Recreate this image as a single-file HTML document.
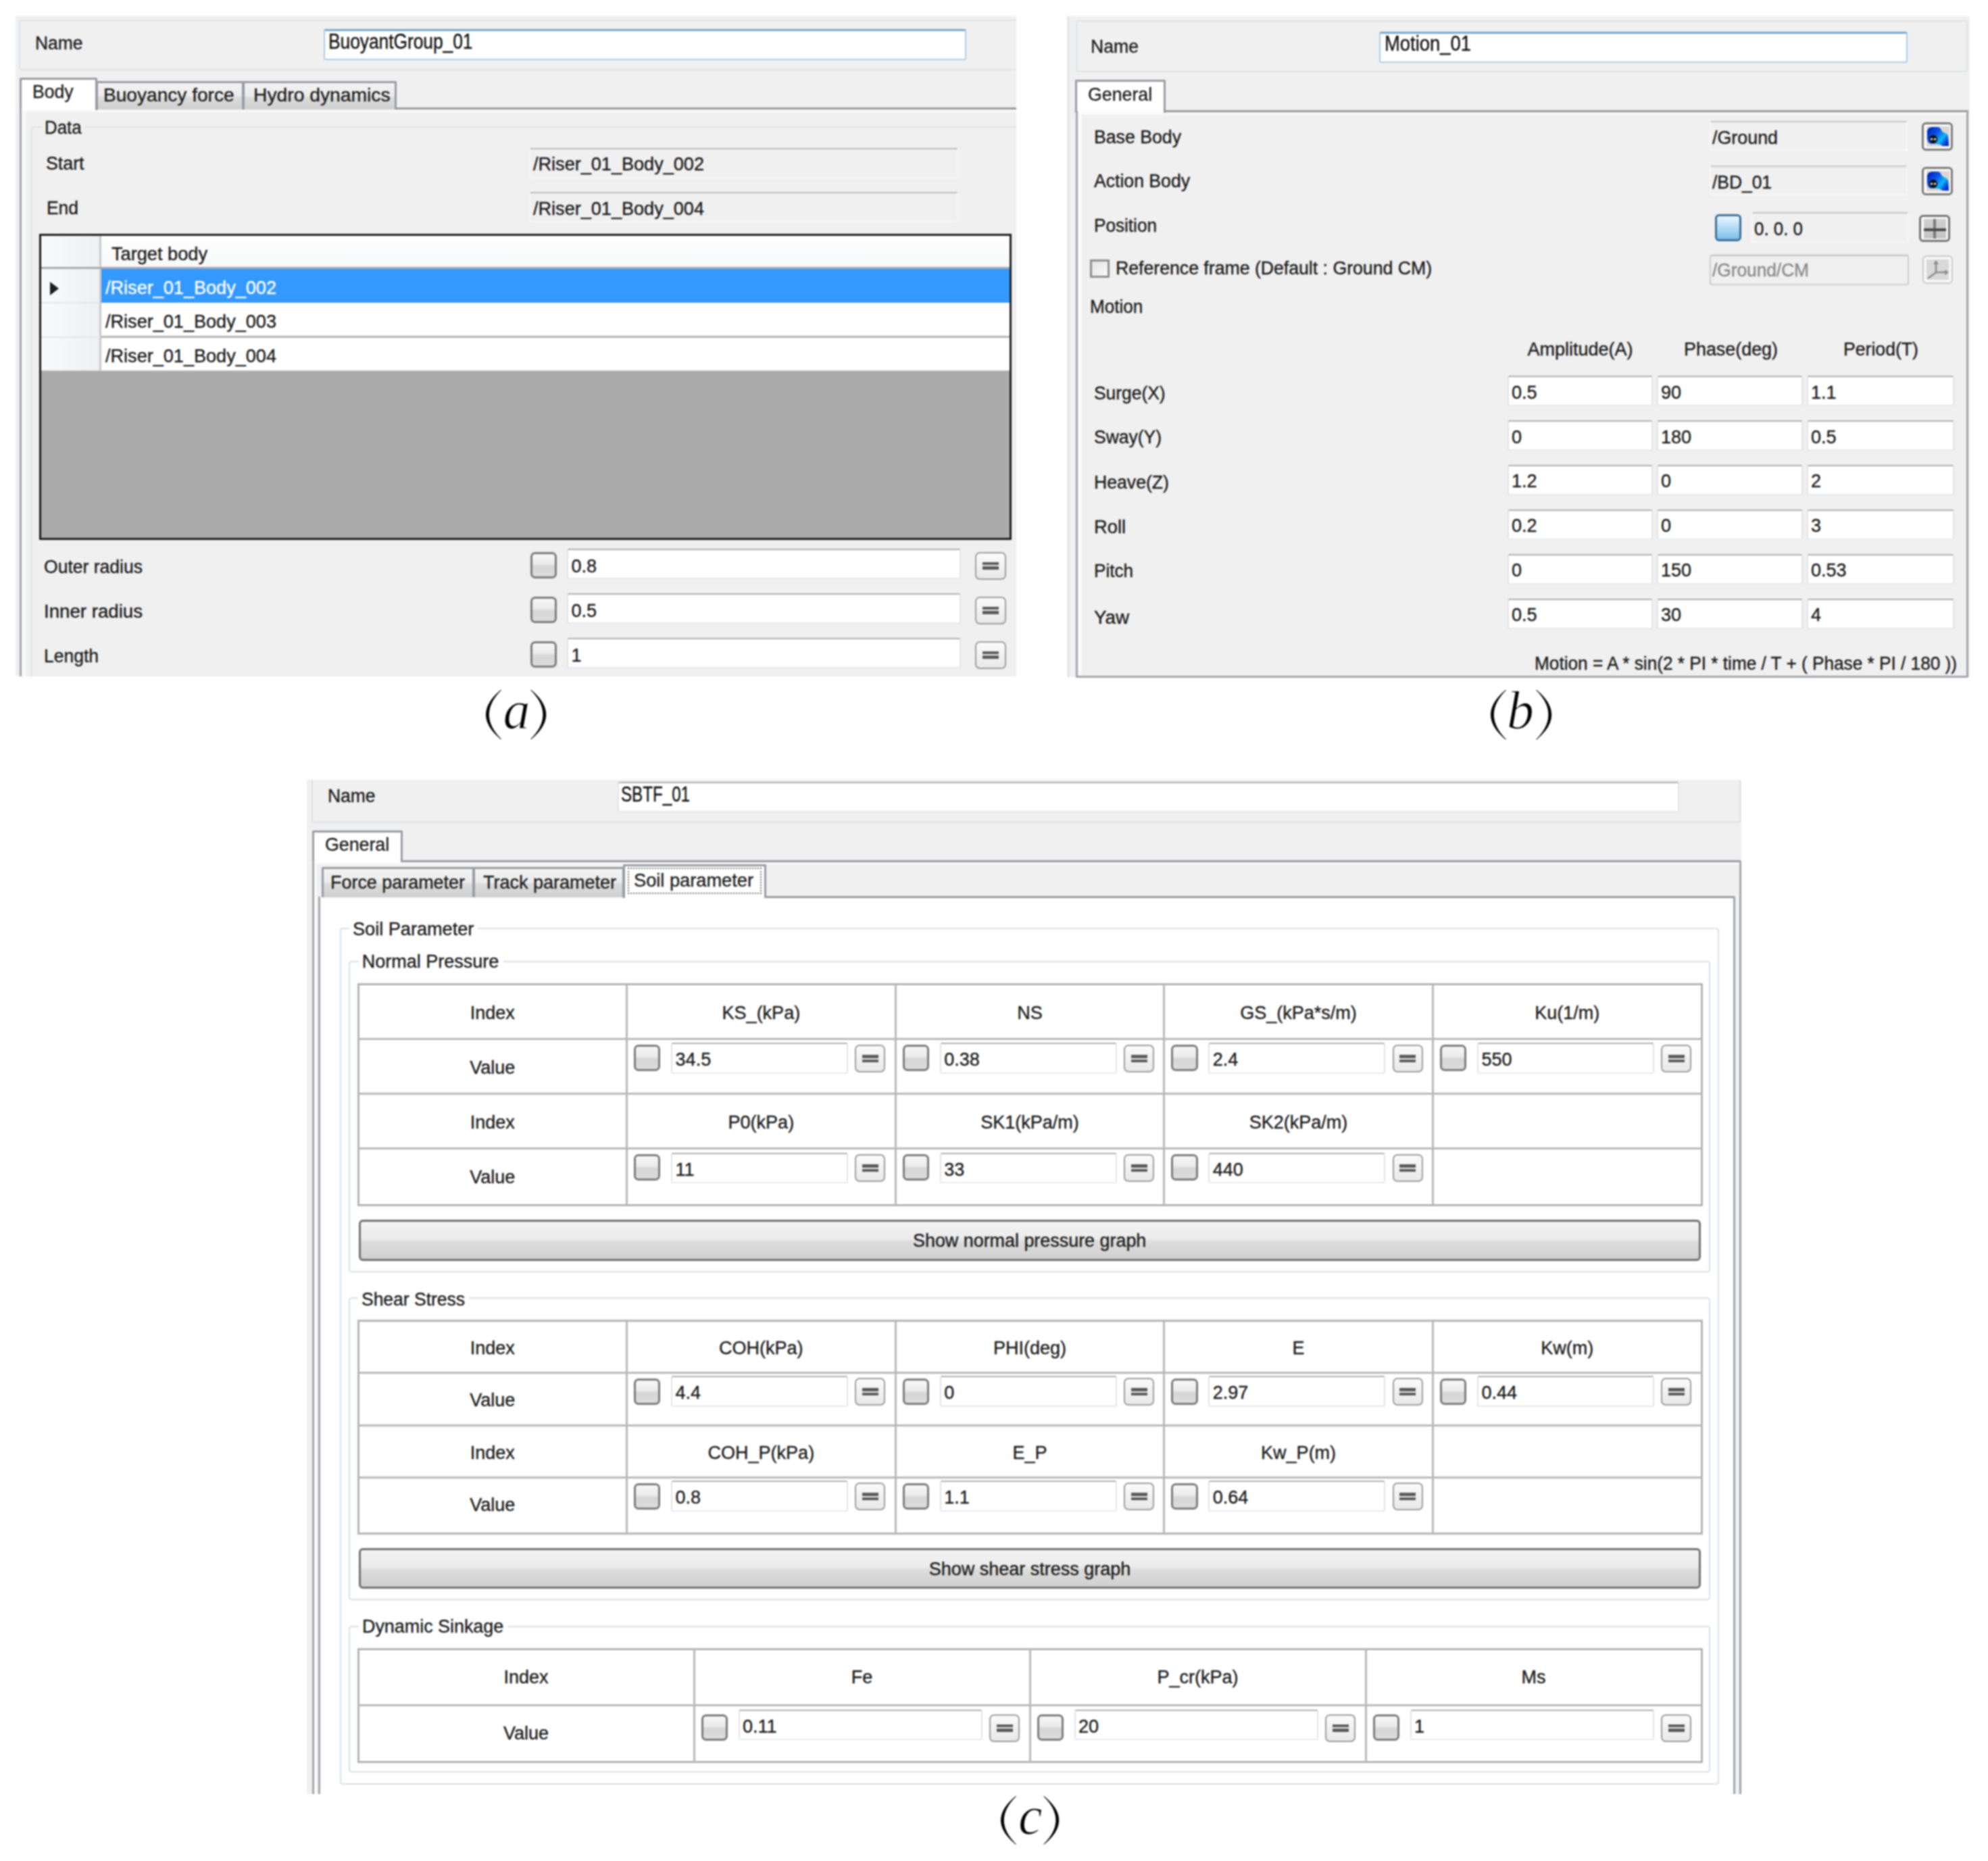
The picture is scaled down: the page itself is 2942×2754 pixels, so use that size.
<!DOCTYPE html>
<html><head><meta charset="utf-8"><title>figure</title><style>
html,body{margin:0;padding:0;background:#fff;}
body{width:2942px;height:2754px;position:relative;overflow:hidden;}
.b{position:absolute;}
.t{position:absolute;white-space:pre;font-family:"Liberation Sans",sans-serif;-webkit-text-stroke:0.35px currentColor;}
.lab{font-family:"Liberation Serif",serif;font-style:italic;color:#000;-webkit-text-stroke:1.2px #fff;}
#root{position:absolute;left:0;top:0;width:2942px;height:2754px;filter:blur(0.8px);}
</style></head><body><div id="root">
<div class="b" style="left:23px;top:24px;width:1481px;height:977px;background:#f0f0f0;"></div>
<div class="b" style="left:28px;top:29px;width:1476px;height:75px;border:2px solid #dde3e8;border-right:none;border-radius:4px 0 0 4px;box-sizing:border-box;"></div>
<div class="t" style="left:51.5px;top:51.1px;font-size:27px;line-height:27px;color:#1a1a1a;transform:scaleX(0.9788);transform-origin:0 0;">Name</div>
<div class="b" style="left:479px;top:43px;width:951px;height:46px;background:#fff;border:2px solid #a9cbe6;border-top:3px solid #7aa6cf;border-radius:3px;box-sizing:border-box;"></div>
<div class="t" style="left:485.5px;top:45.8px;font-size:31px;line-height:31px;color:#111;transform:scaleX(0.8484);transform-origin:0 0;">BuoyantGroup_01</div>
<div class="b" style="left:142px;top:159px;width:1362px;height:3px;background:#989ba2;"></div>
<div class="b" style="left:142px;top:120px;width:219px;height:42px;background:linear-gradient(#f3f3f3 0%,#ebebeb 50%,#dddddd 51%,#cfcfcf 100%);border:3px solid #989ba2;border-bottom:none;border-radius:2px 2px 0 0;box-sizing:border-box;"></div>
<div class="t" style="left:153px;top:126.7px;font-size:28px;line-height:28px;color:#1c1c1c;transform:scaleX(1.0031);transform-origin:0 0;">Buoyancy force</div>
<div class="b" style="left:359px;top:120px;width:228px;height:42px;background:linear-gradient(#f3f3f3 0%,#ebebeb 50%,#dddddd 51%,#cfcfcf 100%);border:3px solid #989ba2;border-bottom:none;border-radius:2px 2px 0 0;box-sizing:border-box;"></div>
<div class="t" style="left:374.7px;top:126.7px;font-size:28px;line-height:28px;color:#1c1c1c;transform:scaleX(1.0093);transform-origin:0 0;">Hydro dynamics</div>
<div class="b" style="left:29px;top:115px;width:115px;height:50px;background:#ffffff;border:3px solid #989ba2;border-bottom:none;border-radius:2px 2px 0 0;box-sizing:border-box;"></div>
<div class="t" style="left:48px;top:122.2px;font-size:28px;line-height:28px;color:#1c1c1c;transform:scaleX(0.9479);transform-origin:0 0;">Body</div>
<div class="b" style="left:28.5px;top:160px;width:3px;height:841px;background:#a3a5ab;"></div>
<div class="b" style="left:32px;top:163px;width:1472px;height:838px;background:#f0f0f0;border-left:6px solid #f9f9f9;border-top:3px solid #f9f9f9;box-sizing:border-box;"></div>
<div class="b" style="left:46px;top:187px;width:1458px;height:814px;border:2px solid #dde3e8;border-right:none;border-bottom:none;border-radius:4px 0 0 0;box-sizing:border-box;"></div>
<div class="b" style="left:60.5px;top:175px;width:65.5px;height:30px;background:#f0f0f0;"></div>
<div class="t" style="left:65.5px;top:176.1px;font-size:27px;line-height:27px;color:#1a1a1a;transform:scaleX(0.9556);transform-origin:0 0;">Data</div>
<div class="t" style="left:68px;top:228.6px;font-size:27px;line-height:27px;color:#1a1a1a;transform:scaleX(0.9909);transform-origin:0 0;">Start</div>
<div class="t" style="left:69px;top:294.7px;font-size:27px;line-height:27px;color:#1a1a1a;transform:scaleX(0.9783);transform-origin:0 0;">End</div>
<div class="b" style="left:783px;top:219px;width:635px;height:45px;background:#f0f0f0;border-top:2px solid #bdbdbd;border-left:2px solid #f6f6f6;border-right:2px solid #f6f6f6;border-bottom:2px solid #f7f7f7;border-radius:3px;box-sizing:border-box;"></div>
<div class="t" style="left:788.6px;top:230.1px;font-size:27px;line-height:27px;color:#1a1a1a;transform:scaleX(1.0032);transform-origin:0 0;">/Riser_01_Body_002</div>
<div class="b" style="left:783px;top:284px;width:635px;height:45px;background:#f0f0f0;border-top:2px solid #bdbdbd;border-left:2px solid #f6f6f6;border-right:2px solid #f6f6f6;border-bottom:2px solid #f7f7f7;border-radius:3px;box-sizing:border-box;"></div>
<div class="t" style="left:788.6px;top:296.1px;font-size:27px;line-height:27px;color:#1a1a1a;transform:scaleX(1.0032);transform-origin:0 0;">/Riser_01_Body_004</div>
<div class="b" style="left:57.5px;top:345.5px;width:1439px;height:453.5px;background:#ababab;border:3px solid #1c1c1c;box-sizing:border-box;"></div>
<div class="b" style="left:61px;top:349px;width:1433px;height:48px;background:linear-gradient(#ffffff,#f7f8fa);"></div>
<div class="b" style="left:61px;top:349px;width:87px;height:199px;background:linear-gradient(90deg,#f9fafb,#eef0f3);"></div>
<div class="b" style="left:146.5px;top:349px;width:3px;height:199px;background:#c9cacc;"></div>
<div class="b" style="left:61px;top:395px;width:1433px;height:3px;background:#a9aaad;"></div>
<div class="t" style="left:165px;top:362.6px;font-size:27px;line-height:27px;color:#1a1a1a;transform:scaleX(1.0064);transform-origin:0 0;">Target body</div>
<div class="b" style="left:149.5px;top:398px;width:1344.5px;height:49.5px;background:#3399ff;"></div>
<div class="b" style="left:149.5px;top:448px;width:1344.5px;height:50px;background:#ffffff;"></div>
<div class="b" style="left:149.5px;top:500px;width:1344.5px;height:48px;background:#ffffff;"></div>
<div class="b" style="left:149.5px;top:497.3px;width:1344.5px;height:3px;background:#b4b5b8;"></div>
<div class="b" style="left:61px;top:446.5px;width:87px;height:2px;background:#e4e5e8;"></div>
<div class="b" style="left:61px;top:497.5px;width:87px;height:2px;background:#e4e5e8;"></div>
<div class="b" style="left:61px;top:547.8px;width:1433px;height:1.5px;background:#d0d0d0;"></div>
<div class="t" style="left:156px;top:413.1px;font-size:27px;line-height:27px;color:#ffffff;transform:scaleX(1.0032);transform-origin:0 0;">/Riser_01_Body_002</div>
<div class="t" style="left:156px;top:463.1px;font-size:27px;line-height:27px;color:#1a1a1a;transform:scaleX(1.0032);transform-origin:0 0;">/Riser_01_Body_003</div>
<div class="t" style="left:156px;top:513.5px;font-size:27px;line-height:27px;color:#1a1a1a;transform:scaleX(1.0032);transform-origin:0 0;">/Riser_01_Body_004</div>
<svg class="b" style="left:73px;top:416px" width="16" height="22"><path d="M1 1 L14 11 L1 21 Z" fill="#1e1e1e"/></svg>
<div class="t" style="left:65px;top:826.1px;font-size:27px;line-height:27px;color:#1a1a1a;transform:scaleX(0.9827);transform-origin:0 0;">Outer radius</div>
<div class="b" style="left:785px;top:816.5px;width:39px;height:39px;background:linear-gradient(#f7f7f7 0%,#ebebeb 45%,#d6d6d6 55%,#dcdcdc 100%);border:3px solid #7b7b7b;border-radius:7px;box-sizing:border-box;"></div>
<div class="b" style="left:839px;top:812px;width:583px;height:45px;background:#ffffff;border-top:2px solid #adadb0;border-left:2px solid #e3e4e8;border-right:2px solid #e3e4e8;border-bottom:2px solid #e6eaef;border-radius:3px;box-sizing:border-box;"></div>
<div class="t" style="left:845.6px;top:824.5px;font-size:27px;line-height:27px;color:#1a1a1a;">0.8</div>
<div class="b" style="left:1443px;top:817px;width:45.5px;height:40.5px;background:linear-gradient(#fbfbfb,#f1f1f1 50%,#e9e9e9);border:2px solid #9c9c9c;border-radius:7px;box-sizing:border-box;"></div>
<div class="b" style="left:1453.8px;top:831.8px;width:24px;height:4.5px;background:#5a5a5a;"></div>
<div class="b" style="left:1453.8px;top:838.2px;width:24px;height:4.5px;background:#5a5a5a;"></div>
<div class="t" style="left:65px;top:892.1px;font-size:27px;line-height:27px;color:#1a1a1a;transform:scaleX(1.0239);transform-origin:0 0;">Inner radius</div>
<div class="b" style="left:785px;top:882.5px;width:39px;height:39px;background:linear-gradient(#f7f7f7 0%,#ebebeb 45%,#d6d6d6 55%,#dcdcdc 100%);border:3px solid #7b7b7b;border-radius:7px;box-sizing:border-box;"></div>
<div class="b" style="left:839px;top:878px;width:583px;height:45px;background:#ffffff;border-top:2px solid #adadb0;border-left:2px solid #e3e4e8;border-right:2px solid #e3e4e8;border-bottom:2px solid #e6eaef;border-radius:3px;box-sizing:border-box;"></div>
<div class="t" style="left:845.6px;top:890.5px;font-size:27px;line-height:27px;color:#1a1a1a;">0.5</div>
<div class="b" style="left:1443px;top:883px;width:45.5px;height:40.5px;background:linear-gradient(#fbfbfb,#f1f1f1 50%,#e9e9e9);border:2px solid #9c9c9c;border-radius:7px;box-sizing:border-box;"></div>
<div class="b" style="left:1453.8px;top:897.8px;width:24px;height:4.5px;background:#5a5a5a;"></div>
<div class="b" style="left:1453.8px;top:904.2px;width:24px;height:4.5px;background:#5a5a5a;"></div>
<div class="t" style="left:65px;top:958.1px;font-size:27px;line-height:27px;color:#1a1a1a;transform:scaleX(0.9808);transform-origin:0 0;">Length</div>
<div class="b" style="left:785px;top:948.5px;width:39px;height:39px;background:linear-gradient(#f7f7f7 0%,#ebebeb 45%,#d6d6d6 55%,#dcdcdc 100%);border:3px solid #7b7b7b;border-radius:7px;box-sizing:border-box;"></div>
<div class="b" style="left:839px;top:944px;width:583px;height:45px;background:#ffffff;border-top:2px solid #adadb0;border-left:2px solid #e3e4e8;border-right:2px solid #e3e4e8;border-bottom:2px solid #e6eaef;border-radius:3px;box-sizing:border-box;"></div>
<div class="t" style="left:845.6px;top:956.5px;font-size:27px;line-height:27px;color:#1a1a1a;">1</div>
<div class="b" style="left:1443px;top:949px;width:45.5px;height:40.5px;background:linear-gradient(#fbfbfb,#f1f1f1 50%,#e9e9e9);border:2px solid #9c9c9c;border-radius:7px;box-sizing:border-box;"></div>
<div class="b" style="left:1453.8px;top:963.8px;width:24px;height:4.5px;background:#5a5a5a;"></div>
<div class="b" style="left:1453.8px;top:970.2px;width:24px;height:4.5px;background:#5a5a5a;"></div>
<div class="b" style="left:1579px;top:24px;width:1336px;height:978px;background:#f0f0f0;"></div>
<div class="b" style="left:1579.5px;top:24px;width:2px;height:978px;background:#e2e2e2;"></div>
<div class="b" style="left:1592px;top:30px;width:1320px;height:77px;border:2px solid #dde3e8;border-radius:4px;box-sizing:border-box;"></div>
<div class="t" style="left:1614px;top:55.6px;font-size:27px;line-height:27px;color:#1a1a1a;transform:scaleX(0.9858);transform-origin:0 0;">Name</div>
<div class="b" style="left:2041px;top:46.5px;width:782px;height:46.5px;background:#fff;border:2px solid #a9cbe6;border-top:3px solid #7aa6cf;border-radius:3px;box-sizing:border-box;"></div>
<div class="t" style="left:2049px;top:48.8px;font-size:31px;line-height:31px;color:#111;transform:scaleX(0.8841);transform-origin:0 0;">Motion_01</div>
<div class="b" style="left:1722px;top:162.5px;width:1191px;height:3px;background:#989ba2;"></div>
<div class="b" style="left:1591px;top:118px;width:134px;height:49px;background:#ffffff;border:3px solid #989ba2;border-bottom:none;border-radius:2px 2px 0 0;box-sizing:border-box;"></div>
<div class="t" style="left:1609.8px;top:125.7px;font-size:28px;line-height:28px;color:#1c1c1c;transform:scaleX(0.9557);transform-origin:0 0;">General</div>
<div class="b" style="left:1591.5px;top:164px;width:3px;height:838px;background:#a3a5ab;"></div>
<div class="b" style="left:2909.5px;top:164px;width:3px;height:838px;background:#a3a5ab;"></div>
<div class="b" style="left:1592px;top:999.5px;width:1320px;height:3px;background:#a3a5ab;"></div>
<div class="b" style="left:1595px;top:167px;width:1315px;height:833px;background:#f0f0f0;border-left:6px solid #f9f9f9;border-top:3px solid #f9f9f9;box-sizing:border-box;"></div>
<div class="t" style="left:1619px;top:189.9px;font-size:27px;line-height:27px;color:#1a1a1a;transform:scaleX(0.9878);transform-origin:0 0;">Base Body</div>
<div class="t" style="left:1619px;top:254.8px;font-size:27px;line-height:27px;color:#1a1a1a;transform:scaleX(0.9855);transform-origin:0 0;">Action Body</div>
<div class="t" style="left:1619px;top:321.1px;font-size:27px;line-height:27px;color:#1a1a1a;transform:scaleX(0.9682);transform-origin:0 0;">Position</div>
<div class="b" style="left:2530px;top:178.6px;width:293px;height:44.9px;background:#f0f0f0;border-top:2px solid #c4c4c4;border-left:2px solid #f7f7f7;border-right:2px solid #f7f7f7;border-bottom:2px solid #f7f7f7;border-radius:3px;box-sizing:border-box;"></div>
<div class="t" style="left:2533.6px;top:191.1px;font-size:27px;line-height:27px;color:#1a1a1a;transform:scaleX(0.9943);transform-origin:0 0;">/Ground</div>
<div class="b" style="left:2844px;top:181px;width:46px;height:42px;background:#fafafa;border:3px solid #7a7a7a;border-radius:6px;box-sizing:border-box;"></div>
<svg class="b" style="left:2850.5px;top:187px" width="34" height="30" viewBox="0 0 34 30"><defs><linearGradient id="bg28621" x1="0" y1="0" x2="1" y2="0.7"><stop offset="0" stop-color="#0018b0"/><stop offset="0.45" stop-color="#0a55e8"/><stop offset="0.75" stop-color="#10b8f8"/><stop offset="1" stop-color="#0030d0"/></linearGradient></defs><rect x="0" y="0" width="34" height="30" fill="#ddd6cf"/><path d="M1 7 Q2 1 9 1 L17 1 Q21 2 22 6 L25 9 Q31 10 32 15 L33 29 L24 29 Q20 26 14 26 L6 26 Q1 24 1 17 Z" fill="url(#bg28621)"/><circle cx="10" cy="19" r="6" fill="#0a0a0a"/><circle cx="7.5" cy="19" r="1.8" fill="#e8e0d0"/><circle cx="12.5" cy="19" r="1.8" fill="#e8e0d0"/></svg>
<div class="b" style="left:2530px;top:244.5px;width:293px;height:44.5px;background:#f0f0f0;border-top:2px solid #c4c4c4;border-left:2px solid #f7f7f7;border-right:2px solid #f7f7f7;border-bottom:2px solid #f7f7f7;border-radius:3px;box-sizing:border-box;"></div>
<div class="t" style="left:2533.6px;top:256.6px;font-size:27px;line-height:27px;color:#1a1a1a;transform:scaleX(0.9771);transform-origin:0 0;">/BD_01</div>
<div class="b" style="left:2844px;top:246.7px;width:46px;height:42px;background:#fafafa;border:3px solid #7a7a7a;border-radius:6px;box-sizing:border-box;"></div>
<svg class="b" style="left:2850.5px;top:252.7px" width="34" height="30" viewBox="0 0 34 30"><defs><linearGradient id="bg28686" x1="0" y1="0" x2="1" y2="0.7"><stop offset="0" stop-color="#0018b0"/><stop offset="0.45" stop-color="#0a55e8"/><stop offset="0.75" stop-color="#10b8f8"/><stop offset="1" stop-color="#0030d0"/></linearGradient></defs><rect x="0" y="0" width="34" height="30" fill="#ddd6cf"/><path d="M1 7 Q2 1 9 1 L17 1 Q21 2 22 6 L25 9 Q31 10 32 15 L33 29 L24 29 Q20 26 14 26 L6 26 Q1 24 1 17 Z" fill="url(#bg28686)"/><circle cx="10" cy="19" r="6" fill="#0a0a0a"/><circle cx="7.5" cy="19" r="1.8" fill="#e8e0d0"/><circle cx="12.5" cy="19" r="1.8" fill="#e8e0d0"/></svg>
<div class="b" style="left:2537.7px;top:316.8px;width:39.3px;height:39.8px;background:linear-gradient(#eaf6ff,#b5dcf7 50%,#7dbde9);border:3px solid #3c6f98;border-radius:6px;box-sizing:border-box;"></div>
<div class="b" style="left:2592px;top:314px;width:233px;height:44.5px;background:#f0f0f0;border-top:2px solid #c4c4c4;border-left:2px solid #f7f7f7;border-right:2px solid #f7f7f7;border-bottom:2px solid #f7f7f7;border-radius:3px;box-sizing:border-box;"></div>
<div class="t" style="left:2596px;top:326.1px;font-size:27px;line-height:27px;color:#1a1a1a;transform:scaleX(0.9593);transform-origin:0 0;">0. 0. 0</div>
<div class="b" style="left:2839.5px;top:317.6px;width:46.5px;height:40.9px;background:#fafafa;border:3px solid #737373;border-radius:6px;box-sizing:border-box;"></div>
<div class="b" style="left:2846.5px;top:323.5px;width:33px;height:29px;background:linear-gradient(#cfcfcf,#c4c4c4);"></div>
<div class="b" style="left:2846.5px;top:338px;width:33px;height:3.5px;background:#4a4a4a;"></div>
<div class="b" style="left:2861px;top:323.5px;width:3.5px;height:29px;background:#7a7a7a;"></div>
<div class="b" style="left:2846.5px;top:338px;width:33px;height:3.5px;background:#4a4a4a;"></div>
<div class="b" style="left:1612.8px;top:383.8px;width:29.2px;height:27.7px;background:linear-gradient(135deg,#e3e3e3,#fbfbfb);border:3px solid #8e8e8e;box-sizing:border-box;"></div>
<div class="t" style="left:1650.5px;top:383.5px;font-size:27px;line-height:27px;color:#1a1a1a;transform:scaleX(0.9870);transform-origin:0 0;">Reference frame (Default : Ground CM)</div>
<div class="b" style="left:2529.5px;top:377px;width:295px;height:45px;background:#f0f0f0;border-top:2px solid #bdbdbd;border-left:2px solid #cdcdcd;border-right:2px solid #cdcdcd;border-bottom:2px solid #cdcdcd;border-radius:3px;box-sizing:border-box;"></div>
<div class="t" style="left:2533.6px;top:387.1px;font-size:27px;line-height:27px;color:#8a8a8a;transform:scaleX(0.9724);transform-origin:0 0;">/Ground/CM</div>
<div class="b" style="left:2845px;top:378px;width:45px;height:42px;background:#f7f7f7;border:2px solid #c9c9c9;border-radius:6px;box-sizing:border-box;"></div>
<div class="b" style="left:2851px;top:384px;width:33px;height:30px;background:#d9d9d9;"></div>
<svg class="b" style="left:2851px;top:384px" width="33" height="30"><path d="M14 3 V19 H31 M14 19 L2 28" stroke="#8c8c8c" stroke-width="2.6" fill="none"/><path d="M10 7 L14 1 L18 7 Z M27 15 L33 19 L27 23 Z" fill="#8c8c8c"/></svg>
<div class="t" style="left:1612.8px;top:440.8px;font-size:27px;line-height:27px;color:#1a1a1a;transform:scaleX(0.9649);transform-origin:0 0;">Motion</div>
<div class="t" style="left:2260.5px;top:504.1px;font-size:27px;line-height:27px;color:#1a1a1a;">Amplitude(A)</div>
<div class="t" style="left:2492px;top:504.1px;font-size:27px;line-height:27px;color:#1a1a1a;transform:scaleX(0.9957);transform-origin:0 0;">Phase(deg)</div>
<div class="t" style="left:2728px;top:504.1px;font-size:27px;line-height:27px;color:#1a1a1a;transform:scaleX(0.9864);transform-origin:0 0;">Period(T)</div>
<div class="t" style="left:1619px;top:569.1px;font-size:27px;line-height:27px;color:#1a1a1a;transform:scaleX(0.9774);transform-origin:0 0;">Surge(X)</div>
<div class="b" style="left:2231px;top:556.3px;width:215px;height:45px;background:#ffffff;border-top:2px solid #adadb0;border-left:2px solid #e3e4e8;border-right:2px solid #e3e4e8;border-bottom:2px solid #e6eaef;border-radius:3px;box-sizing:border-box;"></div>
<div class="t" style="left:2237px;top:567.7px;font-size:27px;line-height:27px;color:#1a1a1a;">0.5</div>
<div class="b" style="left:2452px;top:556.3px;width:215.5px;height:45px;background:#ffffff;border-top:2px solid #adadb0;border-left:2px solid #e3e4e8;border-right:2px solid #e3e4e8;border-bottom:2px solid #e6eaef;border-radius:3px;box-sizing:border-box;"></div>
<div class="t" style="left:2458px;top:567.7px;font-size:27px;line-height:27px;color:#1a1a1a;">90</div>
<div class="b" style="left:2674px;top:556.3px;width:218px;height:45px;background:#ffffff;border-top:2px solid #adadb0;border-left:2px solid #e3e4e8;border-right:2px solid #e3e4e8;border-bottom:2px solid #e6eaef;border-radius:3px;box-sizing:border-box;"></div>
<div class="t" style="left:2680px;top:567.7px;font-size:27px;line-height:27px;color:#1a1a1a;">1.1</div>
<div class="t" style="left:1619px;top:634.1px;font-size:27px;line-height:27px;color:#1a1a1a;transform:scaleX(0.9802);transform-origin:0 0;">Sway(Y)</div>
<div class="b" style="left:2231px;top:622.4px;width:215px;height:45px;background:#ffffff;border-top:2px solid #adadb0;border-left:2px solid #e3e4e8;border-right:2px solid #e3e4e8;border-bottom:2px solid #e6eaef;border-radius:3px;box-sizing:border-box;"></div>
<div class="t" style="left:2237px;top:633.8px;font-size:27px;line-height:27px;color:#1a1a1a;">0</div>
<div class="b" style="left:2452px;top:622.4px;width:215.5px;height:45px;background:#ffffff;border-top:2px solid #adadb0;border-left:2px solid #e3e4e8;border-right:2px solid #e3e4e8;border-bottom:2px solid #e6eaef;border-radius:3px;box-sizing:border-box;"></div>
<div class="t" style="left:2458px;top:633.8px;font-size:27px;line-height:27px;color:#1a1a1a;">180</div>
<div class="b" style="left:2674px;top:622.4px;width:218px;height:45px;background:#ffffff;border-top:2px solid #adadb0;border-left:2px solid #e3e4e8;border-right:2px solid #e3e4e8;border-bottom:2px solid #e6eaef;border-radius:3px;box-sizing:border-box;"></div>
<div class="t" style="left:2680px;top:633.8px;font-size:27px;line-height:27px;color:#1a1a1a;">0.5</div>
<div class="t" style="left:1619px;top:700.5px;font-size:27px;line-height:27px;color:#1a1a1a;transform:scaleX(0.9864);transform-origin:0 0;">Heave(Z)</div>
<div class="b" style="left:2231px;top:687.7px;width:215px;height:45px;background:#ffffff;border-top:2px solid #adadb0;border-left:2px solid #e3e4e8;border-right:2px solid #e3e4e8;border-bottom:2px solid #e6eaef;border-radius:3px;box-sizing:border-box;"></div>
<div class="t" style="left:2237px;top:699.1px;font-size:27px;line-height:27px;color:#1a1a1a;">1.2</div>
<div class="b" style="left:2452px;top:687.7px;width:215.5px;height:45px;background:#ffffff;border-top:2px solid #adadb0;border-left:2px solid #e3e4e8;border-right:2px solid #e3e4e8;border-bottom:2px solid #e6eaef;border-radius:3px;box-sizing:border-box;"></div>
<div class="t" style="left:2458px;top:699.1px;font-size:27px;line-height:27px;color:#1a1a1a;">0</div>
<div class="b" style="left:2674px;top:687.7px;width:218px;height:45px;background:#ffffff;border-top:2px solid #adadb0;border-left:2px solid #e3e4e8;border-right:2px solid #e3e4e8;border-bottom:2px solid #e6eaef;border-radius:3px;box-sizing:border-box;"></div>
<div class="t" style="left:2680px;top:699.1px;font-size:27px;line-height:27px;color:#1a1a1a;">2</div>
<div class="t" style="left:1619px;top:766.7px;font-size:27px;line-height:27px;color:#1a1a1a;transform:scaleX(1.0105);transform-origin:0 0;">Roll</div>
<div class="b" style="left:2231px;top:754px;width:215px;height:45px;background:#ffffff;border-top:2px solid #adadb0;border-left:2px solid #e3e4e8;border-right:2px solid #e3e4e8;border-bottom:2px solid #e6eaef;border-radius:3px;box-sizing:border-box;"></div>
<div class="t" style="left:2237px;top:765.4px;font-size:27px;line-height:27px;color:#1a1a1a;">0.2</div>
<div class="b" style="left:2452px;top:754px;width:215.5px;height:45px;background:#ffffff;border-top:2px solid #adadb0;border-left:2px solid #e3e4e8;border-right:2px solid #e3e4e8;border-bottom:2px solid #e6eaef;border-radius:3px;box-sizing:border-box;"></div>
<div class="t" style="left:2458px;top:765.4px;font-size:27px;line-height:27px;color:#1a1a1a;">0</div>
<div class="b" style="left:2674px;top:754px;width:218px;height:45px;background:#ffffff;border-top:2px solid #adadb0;border-left:2px solid #e3e4e8;border-right:2px solid #e3e4e8;border-bottom:2px solid #e6eaef;border-radius:3px;box-sizing:border-box;"></div>
<div class="t" style="left:2680px;top:765.4px;font-size:27px;line-height:27px;color:#1a1a1a;">3</div>
<div class="t" style="left:1619px;top:831.5px;font-size:27px;line-height:27px;color:#1a1a1a;transform:scaleX(0.9662);transform-origin:0 0;">Pitch</div>
<div class="b" style="left:2231px;top:820px;width:215px;height:45px;background:#ffffff;border-top:2px solid #adadb0;border-left:2px solid #e3e4e8;border-right:2px solid #e3e4e8;border-bottom:2px solid #e6eaef;border-radius:3px;box-sizing:border-box;"></div>
<div class="t" style="left:2237px;top:831.4px;font-size:27px;line-height:27px;color:#1a1a1a;">0</div>
<div class="b" style="left:2452px;top:820px;width:215.5px;height:45px;background:#ffffff;border-top:2px solid #adadb0;border-left:2px solid #e3e4e8;border-right:2px solid #e3e4e8;border-bottom:2px solid #e6eaef;border-radius:3px;box-sizing:border-box;"></div>
<div class="t" style="left:2458px;top:831.4px;font-size:27px;line-height:27px;color:#1a1a1a;">150</div>
<div class="b" style="left:2674px;top:820px;width:218px;height:45px;background:#ffffff;border-top:2px solid #adadb0;border-left:2px solid #e3e4e8;border-right:2px solid #e3e4e8;border-bottom:2px solid #e6eaef;border-radius:3px;box-sizing:border-box;"></div>
<div class="t" style="left:2680px;top:831.4px;font-size:27px;line-height:27px;color:#1a1a1a;">0.53</div>
<div class="t" style="left:1619px;top:901.1px;font-size:27px;line-height:27px;color:#1a1a1a;transform:scaleX(1.0293);transform-origin:0 0;">Yaw</div>
<div class="b" style="left:2231px;top:885.6px;width:215px;height:45px;background:#ffffff;border-top:2px solid #adadb0;border-left:2px solid #e3e4e8;border-right:2px solid #e3e4e8;border-bottom:2px solid #e6eaef;border-radius:3px;box-sizing:border-box;"></div>
<div class="t" style="left:2237px;top:897px;font-size:27px;line-height:27px;color:#1a1a1a;">0.5</div>
<div class="b" style="left:2452px;top:885.6px;width:215.5px;height:45px;background:#ffffff;border-top:2px solid #adadb0;border-left:2px solid #e3e4e8;border-right:2px solid #e3e4e8;border-bottom:2px solid #e6eaef;border-radius:3px;box-sizing:border-box;"></div>
<div class="t" style="left:2458px;top:897px;font-size:27px;line-height:27px;color:#1a1a1a;">30</div>
<div class="b" style="left:2674px;top:885.6px;width:218px;height:45px;background:#ffffff;border-top:2px solid #adadb0;border-left:2px solid #e3e4e8;border-right:2px solid #e3e4e8;border-bottom:2px solid #e6eaef;border-radius:3px;box-sizing:border-box;"></div>
<div class="t" style="left:2680px;top:897px;font-size:27px;line-height:27px;color:#1a1a1a;">4</div>
<div class="t" style="left:2271px;top:969.1px;font-size:27px;line-height:27px;color:#1a1a1a;transform:scaleX(0.9700);transform-origin:0 0;">Motion = A * sin(2 * PI * time / T + ( Phase * PI / 180 ))</div>
<div class="b" style="left:454px;top:1154px;width:2123px;height:1501px;background:#f0f0f0;"></div>
<div class="b" style="left:461px;top:1154px;width:2115px;height:64px;border:2px solid #dde3e8;border-top:none;border-radius:0 0 4px 4px;box-sizing:border-box;"></div>
<div class="t" style="left:485px;top:1164.6px;font-size:27px;line-height:27px;color:#1a1a1a;transform:scaleX(0.9788);transform-origin:0 0;">Name</div>
<div class="b" style="left:913.6px;top:1157px;width:1571.4px;height:45px;background:#ffffff;border-top:2px solid #adadb0;border-left:2px solid #e3e4e8;border-right:2px solid #e3e4e8;border-bottom:2px solid #e6eaef;border-radius:3px;box-sizing:border-box;"></div>
<div class="t" style="left:919px;top:1159.6px;font-size:31px;line-height:31px;color:#111;transform:scaleX(0.7789);transform-origin:0 0;">SBTF_01</div>
<div class="b" style="left:593px;top:1272.5px;width:1983px;height:3px;background:#989ba2;"></div>
<div class="b" style="left:462px;top:1229px;width:134px;height:48px;background:#ffffff;border:3px solid #989ba2;border-bottom:none;border-radius:2px 2px 0 0;box-sizing:border-box;"></div>
<div class="t" style="left:480.5px;top:1236px;font-size:28px;line-height:28px;color:#1c1c1c;transform:scaleX(0.9557);transform-origin:0 0;">General</div>
<div class="b" style="left:464.5px;top:1276px;width:2109.5px;height:1379px;background:#f0f0f0;border-left:4px solid #fbfbfb;border-top:3px solid #fbfbfb;box-sizing:border-box;"></div>
<div class="b" style="left:462px;top:1274px;width:3px;height:1381px;background:#a3a5ab;"></div>
<div class="b" style="left:2573.5px;top:1274px;width:3px;height:1381px;background:#a3a5ab;"></div>
<div class="b" style="left:472.5px;top:1327px;width:2093.5px;height:1328px;background:#ffffff;"></div>
<div class="b" style="left:1131px;top:1325.5px;width:1436px;height:3px;background:#989ba2;"></div>
<div class="b" style="left:476px;top:1283px;width:226px;height:45px;background:linear-gradient(#f3f3f3 0%,#ebebeb 50%,#dddddd 51%,#cfcfcf 100%);border:3px solid #989ba2;border-bottom:none;border-radius:2px 2px 0 0;box-sizing:border-box;"></div>
<div class="t" style="left:489px;top:1292.3px;font-size:28px;line-height:28px;color:#1c1c1c;transform:scaleX(0.9615);transform-origin:0 0;">Force parameter</div>
<div class="b" style="left:700px;top:1283px;width:224px;height:45px;background:linear-gradient(#f3f3f3 0%,#ebebeb 50%,#dddddd 51%,#cfcfcf 100%);border:3px solid #989ba2;border-bottom:none;border-radius:2px 2px 0 0;box-sizing:border-box;"></div>
<div class="t" style="left:714.6px;top:1292.3px;font-size:28px;line-height:28px;color:#1c1c1c;transform:scaleX(0.9640);transform-origin:0 0;">Track parameter</div>
<div class="b" style="left:922px;top:1279px;width:212px;height:50px;background:#ffffff;border:3px solid #989ba2;border-bottom:none;border-radius:2px 2px 0 0;box-sizing:border-box;"></div>
<div class="t" style="left:938px;top:1288.8px;font-size:28px;line-height:28px;color:#1c1c1c;transform:scaleX(0.9720);transform-origin:0 0;">Soil parameter</div>
<div class="b" style="left:928.7px;top:1284px;width:198.3px;height:39px;border:2px dotted #6e6e6e;box-sizing:border-box;"></div>
<div class="b" style="left:471px;top:1327px;width:3px;height:1328px;background:#a3a5ab;"></div>
<div class="b" style="left:2564.5px;top:1327px;width:3px;height:1328px;background:#a3a5ab;"></div>
<div class="b" style="left:503px;top:1373px;width:2041px;height:1268px;border:2px solid #d9e0e6;border-radius:4px;box-sizing:border-box;"></div>
<div class="b" style="left:516.7px;top:1360.7px;width:190.3px;height:30px;background:#ffffff;"></div>
<div class="t" style="left:521.7px;top:1361.8px;font-size:27px;line-height:27px;color:#1a1a1a;transform:scaleX(1.0040);transform-origin:0 0;">Soil Parameter</div>
<div class="b" style="left:516px;top:1422px;width:2015px;height:461px;border:2px solid #d9e0e6;border-radius:4px;box-sizing:border-box;"></div>
<div class="b" style="left:530.8px;top:1409px;width:213.8px;height:30px;background:#ffffff;"></div>
<div class="t" style="left:535.8px;top:1410.1px;font-size:27px;line-height:27px;color:#1a1a1a;">Normal Pressure</div>
<div class="b" style="left:516px;top:1919.5px;width:2015px;height:448.5px;border:2px solid #d9e0e6;border-radius:4px;box-sizing:border-box;"></div>
<div class="b" style="left:530px;top:1908.4px;width:164px;height:30px;background:#ffffff;"></div>
<div class="t" style="left:535px;top:1909.5px;font-size:27px;line-height:27px;color:#1a1a1a;transform:scaleX(0.9803);transform-origin:0 0;">Shear Stress</div>
<div class="b" style="left:516px;top:2406px;width:2015px;height:217px;border:2px solid #d9e0e6;border-radius:4px;box-sizing:border-box;"></div>
<div class="b" style="left:530.8px;top:2393px;width:220.2px;height:30px;background:#ffffff;"></div>
<div class="t" style="left:535.8px;top:2394.1px;font-size:27px;line-height:27px;color:#1a1a1a;transform:scaleX(0.9957);transform-origin:0 0;">Dynamic Sinkage</div>
<div class="b" style="left:530px;top:1456.6px;width:1988px;height:326.9px;background:#ffffff;"></div>
<div class="b" style="left:528.5px;top:1455.1px;width:1991px;height:329.9px;border:3px solid #b3b3b3;box-sizing:border-box;"></div>
<div class="b" style="left:926.1px;top:1456.6px;width:3px;height:326.9px;background:#b8b8b8;"></div>
<div class="b" style="left:1323.7px;top:1456.6px;width:3px;height:326.9px;background:#b8b8b8;"></div>
<div class="b" style="left:1721.3px;top:1456.6px;width:3px;height:326.9px;background:#b8b8b8;"></div>
<div class="b" style="left:2118.9px;top:1456.6px;width:3px;height:326.9px;background:#b8b8b8;"></div>
<div class="b" style="left:530px;top:1535.7px;width:1988px;height:3px;background:#b8b8b8;"></div>
<div class="b" style="left:530px;top:1617.2px;width:1988px;height:3px;background:#b8b8b8;"></div>
<div class="b" style="left:530px;top:1698.1px;width:1988px;height:3px;background:#b8b8b8;"></div>
<div class="t" style="left:695.8px;top:1485.9px;font-size:27px;line-height:27px;color:#1a1a1a;">Index</div>
<div class="t" style="left:1068.6px;top:1485.9px;font-size:27px;line-height:27px;color:#1a1a1a;">KS_(kPa)</div>
<div class="t" style="left:1505.2px;top:1485.9px;font-size:27px;line-height:27px;color:#1a1a1a;">NS</div>
<div class="t" style="left:1835.3px;top:1485.9px;font-size:27px;line-height:27px;color:#1a1a1a;">GS_(kPa*s/m)</div>
<div class="t" style="left:2271.2px;top:1485.9px;font-size:27px;line-height:27px;color:#1a1a1a;">Ku(1/m)</div>
<div class="t" style="left:695.3px;top:1566.5px;font-size:27px;line-height:27px;color:#1a1a1a;">Value</div>
<div class="b" style="left:938.2px;top:1545.6px;width:39.2px;height:39.4px;background:linear-gradient(#f7f7f7 0%,#ebebeb 45%,#d6d6d6 55%,#dcdcdc 100%);border:3px solid #7b7b7b;border-radius:7px;box-sizing:border-box;"></div>
<div class="b" style="left:993.2px;top:1543.2px;width:262px;height:45.5px;background:#ffffff;border-top:2px solid #adadb0;border-left:2px solid #e3e4e8;border-right:2px solid #e3e4e8;border-bottom:2px solid #e6eaef;border-radius:3px;box-sizing:border-box;"></div>
<div class="t" style="left:999.6px;top:1555.1px;font-size:27px;line-height:27px;color:#1a1a1a;">34.5</div>
<div class="b" style="left:1265.4px;top:1546px;width:45px;height:41px;background:linear-gradient(#fbfbfb,#f1f1f1 50%,#e9e9e9);border:2px solid #9c9c9c;border-radius:7px;box-sizing:border-box;"></div>
<div class="b" style="left:1275.9px;top:1561px;width:24px;height:4.5px;background:#5a5a5a;"></div>
<div class="b" style="left:1275.9px;top:1567.5px;width:24px;height:4.5px;background:#5a5a5a;"></div>
<div class="b" style="left:1335.8px;top:1545.6px;width:39.2px;height:39.4px;background:linear-gradient(#f7f7f7 0%,#ebebeb 45%,#d6d6d6 55%,#dcdcdc 100%);border:3px solid #7b7b7b;border-radius:7px;box-sizing:border-box;"></div>
<div class="b" style="left:1390.8px;top:1543.2px;width:262px;height:45.5px;background:#ffffff;border-top:2px solid #adadb0;border-left:2px solid #e3e4e8;border-right:2px solid #e3e4e8;border-bottom:2px solid #e6eaef;border-radius:3px;box-sizing:border-box;"></div>
<div class="t" style="left:1397.2px;top:1555.1px;font-size:27px;line-height:27px;color:#1a1a1a;">0.38</div>
<div class="b" style="left:1663px;top:1546px;width:45px;height:41px;background:linear-gradient(#fbfbfb,#f1f1f1 50%,#e9e9e9);border:2px solid #9c9c9c;border-radius:7px;box-sizing:border-box;"></div>
<div class="b" style="left:1673.5px;top:1561px;width:24px;height:4.5px;background:#5a5a5a;"></div>
<div class="b" style="left:1673.5px;top:1567.5px;width:24px;height:4.5px;background:#5a5a5a;"></div>
<div class="b" style="left:1733.4px;top:1545.6px;width:39.2px;height:39.4px;background:linear-gradient(#f7f7f7 0%,#ebebeb 45%,#d6d6d6 55%,#dcdcdc 100%);border:3px solid #7b7b7b;border-radius:7px;box-sizing:border-box;"></div>
<div class="b" style="left:1788.4px;top:1543.2px;width:262px;height:45.5px;background:#ffffff;border-top:2px solid #adadb0;border-left:2px solid #e3e4e8;border-right:2px solid #e3e4e8;border-bottom:2px solid #e6eaef;border-radius:3px;box-sizing:border-box;"></div>
<div class="t" style="left:1794.8px;top:1555.1px;font-size:27px;line-height:27px;color:#1a1a1a;">2.4</div>
<div class="b" style="left:2060.6px;top:1546px;width:45px;height:41px;background:linear-gradient(#fbfbfb,#f1f1f1 50%,#e9e9e9);border:2px solid #9c9c9c;border-radius:7px;box-sizing:border-box;"></div>
<div class="b" style="left:2071.1px;top:1561px;width:24px;height:4.5px;background:#5a5a5a;"></div>
<div class="b" style="left:2071.1px;top:1567.5px;width:24px;height:4.5px;background:#5a5a5a;"></div>
<div class="b" style="left:2131px;top:1545.6px;width:39.2px;height:39.4px;background:linear-gradient(#f7f7f7 0%,#ebebeb 45%,#d6d6d6 55%,#dcdcdc 100%);border:3px solid #7b7b7b;border-radius:7px;box-sizing:border-box;"></div>
<div class="b" style="left:2186px;top:1543.2px;width:262px;height:45.5px;background:#ffffff;border-top:2px solid #adadb0;border-left:2px solid #e3e4e8;border-right:2px solid #e3e4e8;border-bottom:2px solid #e6eaef;border-radius:3px;box-sizing:border-box;"></div>
<div class="t" style="left:2192.4px;top:1555.1px;font-size:27px;line-height:27px;color:#1a1a1a;">550</div>
<div class="b" style="left:2458.2px;top:1546px;width:45px;height:41px;background:linear-gradient(#fbfbfb,#f1f1f1 50%,#e9e9e9);border:2px solid #9c9c9c;border-radius:7px;box-sizing:border-box;"></div>
<div class="b" style="left:2468.7px;top:1561px;width:24px;height:4.5px;background:#5a5a5a;"></div>
<div class="b" style="left:2468.7px;top:1567.5px;width:24px;height:4.5px;background:#5a5a5a;"></div>
<div class="t" style="left:695.8px;top:1648px;font-size:27px;line-height:27px;color:#1a1a1a;">Index</div>
<div class="t" style="left:1077.6px;top:1648px;font-size:27px;line-height:27px;color:#1a1a1a;">P0(kPa)</div>
<div class="t" style="left:1451.2px;top:1648px;font-size:27px;line-height:27px;color:#1a1a1a;">SK1(kPa/m)</div>
<div class="t" style="left:1848.8px;top:1648px;font-size:27px;line-height:27px;color:#1a1a1a;">SK2(kPa/m)</div>
<div class="t" style="left:695.3px;top:1728.9px;font-size:27px;line-height:27px;color:#1a1a1a;">Value</div>
<div class="b" style="left:938.2px;top:1708px;width:39.2px;height:39.4px;background:linear-gradient(#f7f7f7 0%,#ebebeb 45%,#d6d6d6 55%,#dcdcdc 100%);border:3px solid #7b7b7b;border-radius:7px;box-sizing:border-box;"></div>
<div class="b" style="left:993.2px;top:1705.6px;width:262px;height:45.5px;background:#ffffff;border-top:2px solid #adadb0;border-left:2px solid #e3e4e8;border-right:2px solid #e3e4e8;border-bottom:2px solid #e6eaef;border-radius:3px;box-sizing:border-box;"></div>
<div class="t" style="left:999.6px;top:1717.5px;font-size:27px;line-height:27px;color:#1a1a1a;">11</div>
<div class="b" style="left:1265.4px;top:1708.4px;width:45px;height:41px;background:linear-gradient(#fbfbfb,#f1f1f1 50%,#e9e9e9);border:2px solid #9c9c9c;border-radius:7px;box-sizing:border-box;"></div>
<div class="b" style="left:1275.9px;top:1723.4px;width:24px;height:4.5px;background:#5a5a5a;"></div>
<div class="b" style="left:1275.9px;top:1729.9px;width:24px;height:4.5px;background:#5a5a5a;"></div>
<div class="b" style="left:1335.8px;top:1708px;width:39.2px;height:39.4px;background:linear-gradient(#f7f7f7 0%,#ebebeb 45%,#d6d6d6 55%,#dcdcdc 100%);border:3px solid #7b7b7b;border-radius:7px;box-sizing:border-box;"></div>
<div class="b" style="left:1390.8px;top:1705.6px;width:262px;height:45.5px;background:#ffffff;border-top:2px solid #adadb0;border-left:2px solid #e3e4e8;border-right:2px solid #e3e4e8;border-bottom:2px solid #e6eaef;border-radius:3px;box-sizing:border-box;"></div>
<div class="t" style="left:1397.2px;top:1717.5px;font-size:27px;line-height:27px;color:#1a1a1a;">33</div>
<div class="b" style="left:1663px;top:1708.4px;width:45px;height:41px;background:linear-gradient(#fbfbfb,#f1f1f1 50%,#e9e9e9);border:2px solid #9c9c9c;border-radius:7px;box-sizing:border-box;"></div>
<div class="b" style="left:1673.5px;top:1723.4px;width:24px;height:4.5px;background:#5a5a5a;"></div>
<div class="b" style="left:1673.5px;top:1729.9px;width:24px;height:4.5px;background:#5a5a5a;"></div>
<div class="b" style="left:1733.4px;top:1708px;width:39.2px;height:39.4px;background:linear-gradient(#f7f7f7 0%,#ebebeb 45%,#d6d6d6 55%,#dcdcdc 100%);border:3px solid #7b7b7b;border-radius:7px;box-sizing:border-box;"></div>
<div class="b" style="left:1788.4px;top:1705.6px;width:262px;height:45.5px;background:#ffffff;border-top:2px solid #adadb0;border-left:2px solid #e3e4e8;border-right:2px solid #e3e4e8;border-bottom:2px solid #e6eaef;border-radius:3px;box-sizing:border-box;"></div>
<div class="t" style="left:1794.8px;top:1717.5px;font-size:27px;line-height:27px;color:#1a1a1a;">440</div>
<div class="b" style="left:2060.6px;top:1708.4px;width:45px;height:41px;background:linear-gradient(#fbfbfb,#f1f1f1 50%,#e9e9e9);border:2px solid #9c9c9c;border-radius:7px;box-sizing:border-box;"></div>
<div class="b" style="left:2071.1px;top:1723.4px;width:24px;height:4.5px;background:#5a5a5a;"></div>
<div class="b" style="left:2071.1px;top:1729.9px;width:24px;height:4.5px;background:#5a5a5a;"></div>
<div class="b" style="left:530.7px;top:1805px;width:1986.8px;height:61px;background:linear-gradient(#f3f3f3 0%,#ececec 45%,#dcdcdc 55%,#d0d0d0 100%);border:3px solid #707070;border-radius:6px;box-sizing:border-box;"></div>
<div class="t" style="left:1351.3px;top:1823.1px;font-size:27px;line-height:27px;color:#1a1a1a;transform:scaleX(0.9960);transform-origin:0 0;">Show normal pressure graph</div>
<div class="b" style="left:530px;top:1954.5px;width:1988px;height:315.1px;background:#ffffff;"></div>
<div class="b" style="left:528.5px;top:1953px;width:1991px;height:318.1px;border:3px solid #b3b3b3;box-sizing:border-box;"></div>
<div class="b" style="left:926.1px;top:1954.5px;width:3px;height:315.1px;background:#b8b8b8;"></div>
<div class="b" style="left:1323.7px;top:1954.5px;width:3px;height:315.1px;background:#b8b8b8;"></div>
<div class="b" style="left:1721.3px;top:1954.5px;width:3px;height:315.1px;background:#b8b8b8;"></div>
<div class="b" style="left:2118.9px;top:1954.5px;width:3px;height:315.1px;background:#b8b8b8;"></div>
<div class="b" style="left:530px;top:2029.5px;width:1988px;height:3px;background:#b8b8b8;"></div>
<div class="b" style="left:530px;top:2107.5px;width:1988px;height:3px;background:#b8b8b8;"></div>
<div class="b" style="left:530px;top:2184.5px;width:1988px;height:3px;background:#b8b8b8;"></div>
<div class="t" style="left:695.8px;top:1982px;font-size:27px;line-height:27px;color:#1a1a1a;">Index</div>
<div class="t" style="left:1064.1px;top:1982px;font-size:27px;line-height:27px;color:#1a1a1a;">COH(kPa)</div>
<div class="t" style="left:1470px;top:1982px;font-size:27px;line-height:27px;color:#1a1a1a;">PHI(deg)</div>
<div class="t" style="left:1912.6px;top:1982px;font-size:27px;line-height:27px;color:#1a1a1a;">E</div>
<div class="t" style="left:2280.2px;top:1982px;font-size:27px;line-height:27px;color:#1a1a1a;">Kw(m)</div>
<div class="t" style="left:695.3px;top:2059.1px;font-size:27px;line-height:27px;color:#1a1a1a;">Value</div>
<div class="b" style="left:938.2px;top:2040px;width:39.2px;height:39.4px;background:linear-gradient(#f7f7f7 0%,#ebebeb 45%,#d6d6d6 55%,#dcdcdc 100%);border:3px solid #7b7b7b;border-radius:7px;box-sizing:border-box;"></div>
<div class="b" style="left:993.2px;top:2036px;width:262px;height:45.5px;background:#ffffff;border-top:2px solid #adadb0;border-left:2px solid #e3e4e8;border-right:2px solid #e3e4e8;border-bottom:2px solid #e6eaef;border-radius:3px;box-sizing:border-box;"></div>
<div class="t" style="left:999.6px;top:2047.9px;font-size:27px;line-height:27px;color:#1a1a1a;">4.4</div>
<div class="b" style="left:1265.4px;top:2039px;width:45px;height:41px;background:linear-gradient(#fbfbfb,#f1f1f1 50%,#e9e9e9);border:2px solid #9c9c9c;border-radius:7px;box-sizing:border-box;"></div>
<div class="b" style="left:1275.9px;top:2054px;width:24px;height:4.5px;background:#5a5a5a;"></div>
<div class="b" style="left:1275.9px;top:2060.5px;width:24px;height:4.5px;background:#5a5a5a;"></div>
<div class="b" style="left:1335.8px;top:2040px;width:39.2px;height:39.4px;background:linear-gradient(#f7f7f7 0%,#ebebeb 45%,#d6d6d6 55%,#dcdcdc 100%);border:3px solid #7b7b7b;border-radius:7px;box-sizing:border-box;"></div>
<div class="b" style="left:1390.8px;top:2036px;width:262px;height:45.5px;background:#ffffff;border-top:2px solid #adadb0;border-left:2px solid #e3e4e8;border-right:2px solid #e3e4e8;border-bottom:2px solid #e6eaef;border-radius:3px;box-sizing:border-box;"></div>
<div class="t" style="left:1397.2px;top:2047.9px;font-size:27px;line-height:27px;color:#1a1a1a;">0</div>
<div class="b" style="left:1663px;top:2039px;width:45px;height:41px;background:linear-gradient(#fbfbfb,#f1f1f1 50%,#e9e9e9);border:2px solid #9c9c9c;border-radius:7px;box-sizing:border-box;"></div>
<div class="b" style="left:1673.5px;top:2054px;width:24px;height:4.5px;background:#5a5a5a;"></div>
<div class="b" style="left:1673.5px;top:2060.5px;width:24px;height:4.5px;background:#5a5a5a;"></div>
<div class="b" style="left:1733.4px;top:2040px;width:39.2px;height:39.4px;background:linear-gradient(#f7f7f7 0%,#ebebeb 45%,#d6d6d6 55%,#dcdcdc 100%);border:3px solid #7b7b7b;border-radius:7px;box-sizing:border-box;"></div>
<div class="b" style="left:1788.4px;top:2036px;width:262px;height:45.5px;background:#ffffff;border-top:2px solid #adadb0;border-left:2px solid #e3e4e8;border-right:2px solid #e3e4e8;border-bottom:2px solid #e6eaef;border-radius:3px;box-sizing:border-box;"></div>
<div class="t" style="left:1794.8px;top:2047.9px;font-size:27px;line-height:27px;color:#1a1a1a;">2.97</div>
<div class="b" style="left:2060.6px;top:2039px;width:45px;height:41px;background:linear-gradient(#fbfbfb,#f1f1f1 50%,#e9e9e9);border:2px solid #9c9c9c;border-radius:7px;box-sizing:border-box;"></div>
<div class="b" style="left:2071.1px;top:2054px;width:24px;height:4.5px;background:#5a5a5a;"></div>
<div class="b" style="left:2071.1px;top:2060.5px;width:24px;height:4.5px;background:#5a5a5a;"></div>
<div class="b" style="left:2131px;top:2040px;width:39.2px;height:39.4px;background:linear-gradient(#f7f7f7 0%,#ebebeb 45%,#d6d6d6 55%,#dcdcdc 100%);border:3px solid #7b7b7b;border-radius:7px;box-sizing:border-box;"></div>
<div class="b" style="left:2186px;top:2036px;width:262px;height:45.5px;background:#ffffff;border-top:2px solid #adadb0;border-left:2px solid #e3e4e8;border-right:2px solid #e3e4e8;border-bottom:2px solid #e6eaef;border-radius:3px;box-sizing:border-box;"></div>
<div class="t" style="left:2192.4px;top:2047.9px;font-size:27px;line-height:27px;color:#1a1a1a;">0.44</div>
<div class="b" style="left:2458.2px;top:2039px;width:45px;height:41px;background:linear-gradient(#fbfbfb,#f1f1f1 50%,#e9e9e9);border:2px solid #9c9c9c;border-radius:7px;box-sizing:border-box;"></div>
<div class="b" style="left:2468.7px;top:2054px;width:24px;height:4.5px;background:#5a5a5a;"></div>
<div class="b" style="left:2468.7px;top:2060.5px;width:24px;height:4.5px;background:#5a5a5a;"></div>
<div class="t" style="left:695.8px;top:2136.5px;font-size:27px;line-height:27px;color:#1a1a1a;">Index</div>
<div class="t" style="left:1047.6px;top:2136.5px;font-size:27px;line-height:27px;color:#1a1a1a;">COH_P(kPa)</div>
<div class="t" style="left:1498.5px;top:2136.5px;font-size:27px;line-height:27px;color:#1a1a1a;">E_P</div>
<div class="t" style="left:1866.1px;top:2136.5px;font-size:27px;line-height:27px;color:#1a1a1a;">Kw_P(m)</div>
<div class="t" style="left:695.3px;top:2214.1px;font-size:27px;line-height:27px;color:#1a1a1a;">Value</div>
<div class="b" style="left:938.2px;top:2195px;width:39.2px;height:39.4px;background:linear-gradient(#f7f7f7 0%,#ebebeb 45%,#d6d6d6 55%,#dcdcdc 100%);border:3px solid #7b7b7b;border-radius:7px;box-sizing:border-box;"></div>
<div class="b" style="left:993.2px;top:2191px;width:262px;height:45.5px;background:#ffffff;border-top:2px solid #adadb0;border-left:2px solid #e3e4e8;border-right:2px solid #e3e4e8;border-bottom:2px solid #e6eaef;border-radius:3px;box-sizing:border-box;"></div>
<div class="t" style="left:999.6px;top:2202.9px;font-size:27px;line-height:27px;color:#1a1a1a;">0.8</div>
<div class="b" style="left:1265.4px;top:2194px;width:45px;height:41px;background:linear-gradient(#fbfbfb,#f1f1f1 50%,#e9e9e9);border:2px solid #9c9c9c;border-radius:7px;box-sizing:border-box;"></div>
<div class="b" style="left:1275.9px;top:2209px;width:24px;height:4.5px;background:#5a5a5a;"></div>
<div class="b" style="left:1275.9px;top:2215.5px;width:24px;height:4.5px;background:#5a5a5a;"></div>
<div class="b" style="left:1335.8px;top:2195px;width:39.2px;height:39.4px;background:linear-gradient(#f7f7f7 0%,#ebebeb 45%,#d6d6d6 55%,#dcdcdc 100%);border:3px solid #7b7b7b;border-radius:7px;box-sizing:border-box;"></div>
<div class="b" style="left:1390.8px;top:2191px;width:262px;height:45.5px;background:#ffffff;border-top:2px solid #adadb0;border-left:2px solid #e3e4e8;border-right:2px solid #e3e4e8;border-bottom:2px solid #e6eaef;border-radius:3px;box-sizing:border-box;"></div>
<div class="t" style="left:1397.2px;top:2202.9px;font-size:27px;line-height:27px;color:#1a1a1a;">1.1</div>
<div class="b" style="left:1663px;top:2194px;width:45px;height:41px;background:linear-gradient(#fbfbfb,#f1f1f1 50%,#e9e9e9);border:2px solid #9c9c9c;border-radius:7px;box-sizing:border-box;"></div>
<div class="b" style="left:1673.5px;top:2209px;width:24px;height:4.5px;background:#5a5a5a;"></div>
<div class="b" style="left:1673.5px;top:2215.5px;width:24px;height:4.5px;background:#5a5a5a;"></div>
<div class="b" style="left:1733.4px;top:2195px;width:39.2px;height:39.4px;background:linear-gradient(#f7f7f7 0%,#ebebeb 45%,#d6d6d6 55%,#dcdcdc 100%);border:3px solid #7b7b7b;border-radius:7px;box-sizing:border-box;"></div>
<div class="b" style="left:1788.4px;top:2191px;width:262px;height:45.5px;background:#ffffff;border-top:2px solid #adadb0;border-left:2px solid #e3e4e8;border-right:2px solid #e3e4e8;border-bottom:2px solid #e6eaef;border-radius:3px;box-sizing:border-box;"></div>
<div class="t" style="left:1794.8px;top:2202.9px;font-size:27px;line-height:27px;color:#1a1a1a;">0.64</div>
<div class="b" style="left:2060.6px;top:2194px;width:45px;height:41px;background:linear-gradient(#fbfbfb,#f1f1f1 50%,#e9e9e9);border:2px solid #9c9c9c;border-radius:7px;box-sizing:border-box;"></div>
<div class="b" style="left:2071.1px;top:2209px;width:24px;height:4.5px;background:#5a5a5a;"></div>
<div class="b" style="left:2071.1px;top:2215.5px;width:24px;height:4.5px;background:#5a5a5a;"></div>
<div class="b" style="left:530.7px;top:2291px;width:1986.8px;height:60px;background:linear-gradient(#f3f3f3 0%,#ececec 45%,#dcdcdc 55%,#d0d0d0 100%);border:3px solid #707070;border-radius:6px;box-sizing:border-box;"></div>
<div class="t" style="left:1374.7px;top:2309.1px;font-size:27px;line-height:27px;color:#1a1a1a;">Show shear stress graph</div>
<div class="b" style="left:530px;top:2440px;width:1988px;height:167px;background:#ffffff;"></div>
<div class="b" style="left:528.5px;top:2438.5px;width:1991px;height:170px;border:3px solid #b3b3b3;box-sizing:border-box;"></div>
<div class="b" style="left:1025.5px;top:2440px;width:3px;height:167px;background:#b8b8b8;"></div>
<div class="b" style="left:1522.5px;top:2440px;width:3px;height:167px;background:#b8b8b8;"></div>
<div class="b" style="left:2019.5px;top:2440px;width:3px;height:167px;background:#b8b8b8;"></div>
<div class="b" style="left:530px;top:2522px;width:1988px;height:3px;background:#b8b8b8;"></div>
<div class="t" style="left:745.5px;top:2468.9px;font-size:27px;line-height:27px;color:#1a1a1a;">Index</div>
<div class="t" style="left:1259.7px;top:2468.9px;font-size:27px;line-height:27px;color:#1a1a1a;">Fe</div>
<div class="t" style="left:1712.5px;top:2468.9px;font-size:27px;line-height:27px;color:#1a1a1a;">P_cr(kPa)</div>
<div class="t" style="left:2251.5px;top:2468.9px;font-size:27px;line-height:27px;color:#1a1a1a;">Ms</div>
<div class="t" style="left:745px;top:2551.9px;font-size:27px;line-height:27px;color:#1a1a1a;">Value</div>
<div class="b" style="left:1037.6px;top:2537px;width:39.2px;height:39.4px;background:linear-gradient(#f7f7f7 0%,#ebebeb 45%,#d6d6d6 55%,#dcdcdc 100%);border:3px solid #7b7b7b;border-radius:7px;box-sizing:border-box;"></div>
<div class="b" style="left:1092.6px;top:2530px;width:361.4px;height:44.8px;background:#ffffff;border-top:2px solid #adadb0;border-left:2px solid #e3e4e8;border-right:2px solid #e3e4e8;border-bottom:2px solid #e6eaef;border-radius:3px;box-sizing:border-box;"></div>
<div class="t" style="left:1099px;top:2541.9px;font-size:27px;line-height:27px;color:#1a1a1a;">0.11</div>
<div class="b" style="left:1464.2px;top:2536.5px;width:45px;height:41px;background:linear-gradient(#fbfbfb,#f1f1f1 50%,#e9e9e9);border:2px solid #9c9c9c;border-radius:7px;box-sizing:border-box;"></div>
<div class="b" style="left:1474.7px;top:2551.5px;width:24px;height:4.5px;background:#5a5a5a;"></div>
<div class="b" style="left:1474.7px;top:2558px;width:24px;height:4.5px;background:#5a5a5a;"></div>
<div class="b" style="left:1534.6px;top:2537px;width:39.2px;height:39.4px;background:linear-gradient(#f7f7f7 0%,#ebebeb 45%,#d6d6d6 55%,#dcdcdc 100%);border:3px solid #7b7b7b;border-radius:7px;box-sizing:border-box;"></div>
<div class="b" style="left:1589.6px;top:2530px;width:361.4px;height:44.8px;background:#ffffff;border-top:2px solid #adadb0;border-left:2px solid #e3e4e8;border-right:2px solid #e3e4e8;border-bottom:2px solid #e6eaef;border-radius:3px;box-sizing:border-box;"></div>
<div class="t" style="left:1596px;top:2541.9px;font-size:27px;line-height:27px;color:#1a1a1a;">20</div>
<div class="b" style="left:1961.2px;top:2536.5px;width:45px;height:41px;background:linear-gradient(#fbfbfb,#f1f1f1 50%,#e9e9e9);border:2px solid #9c9c9c;border-radius:7px;box-sizing:border-box;"></div>
<div class="b" style="left:1971.7px;top:2551.5px;width:24px;height:4.5px;background:#5a5a5a;"></div>
<div class="b" style="left:1971.7px;top:2558px;width:24px;height:4.5px;background:#5a5a5a;"></div>
<div class="b" style="left:2031.6px;top:2537px;width:39.2px;height:39.4px;background:linear-gradient(#f7f7f7 0%,#ebebeb 45%,#d6d6d6 55%,#dcdcdc 100%);border:3px solid #7b7b7b;border-radius:7px;box-sizing:border-box;"></div>
<div class="b" style="left:2086.6px;top:2530px;width:361.4px;height:44.8px;background:#ffffff;border-top:2px solid #adadb0;border-left:2px solid #e3e4e8;border-right:2px solid #e3e4e8;border-bottom:2px solid #e6eaef;border-radius:3px;box-sizing:border-box;"></div>
<div class="t" style="left:2093px;top:2541.9px;font-size:27px;line-height:27px;color:#1a1a1a;">1</div>
<div class="b" style="left:2458.2px;top:2536.5px;width:45px;height:41px;background:linear-gradient(#fbfbfb,#f1f1f1 50%,#e9e9e9);border:2px solid #9c9c9c;border-radius:7px;box-sizing:border-box;"></div>
<div class="b" style="left:2468.7px;top:2551.5px;width:24px;height:4.5px;background:#5a5a5a;"></div>
<div class="b" style="left:2468.7px;top:2558px;width:24px;height:4.5px;background:#5a5a5a;"></div>
<svg class="b" style="left:719.4px;top:1021px;overflow:visible" width="26" height="73"><path d="M22 0 Q-22 36.5 22 73 L23.2 73 Q-13.6 36.5 23.2 0 Z" fill="#000"/></svg>
<svg class="b" style="left:784.8px;top:1021px;overflow:visible" width="26" height="73"><path d="M1.2 0 Q45.2 36.5 1.2 73 L0 73 Q36.8 36.5 0 0 Z" fill="#000"/></svg>
<div class="t lab" style="left:744.5px;top:1011.3px;font-size:80px;line-height:80px;">a</div>
<svg class="b" style="left:2206.3px;top:1020.6px;overflow:visible" width="26" height="73.4"><path d="M22 0 Q-22 36.7 22 73.4 L23.2 73.4 Q-13.6 36.7 23.2 0 Z" fill="#000"/></svg>
<svg class="b" style="left:2272.8px;top:1020.6px;overflow:visible" width="26" height="73.4"><path d="M1.2 0 Q45.2 36.7 1.2 73.4 L0 73.4 Q36.8 36.7 0 0 Z" fill="#000"/></svg>
<div class="t lab" style="left:2230px;top:1011.3px;font-size:80px;line-height:80px;">b</div>
<svg class="b" style="left:1481.2px;top:2657.6px;overflow:visible" width="26" height="71.4"><path d="M22 0 Q-22 35.7 22 71.4 L23.2 71.4 Q-13.6 35.7 23.2 0 Z" fill="#000"/></svg>
<svg class="b" style="left:1543.6px;top:2657.6px;overflow:visible" width="26" height="71.4"><path d="M1.2 0 Q45.2 35.7 1.2 71.4 L0 71.4 Q36.8 35.7 0 0 Z" fill="#000"/></svg>
<div class="t lab" style="left:1507px;top:2646.7px;font-size:80px;line-height:80px;">c</div>
</div></body></html>
